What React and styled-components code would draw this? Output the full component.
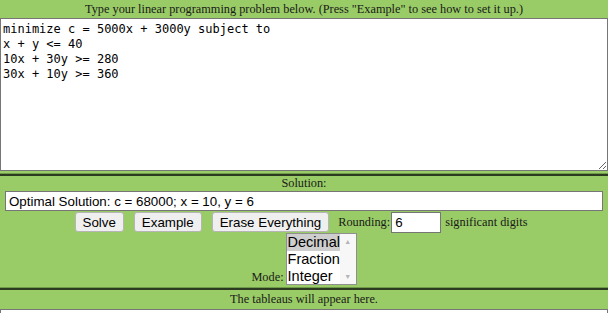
import React from 'react'
import styled, { createGlobalStyle } from 'styled-components'

const Global = createGlobalStyle`
  html, body { margin: 0; padding: 0; background: #ffffff; }
  body { font-family: "Liberation Serif", "Times New Roman", serif; font-size: 12.3px; }
`

const problem = `minimize c = 5000x + 3000y subject to
x + y <= 40
10x + 30y >= 280
30x + 10y >= 360`

const App = () => {
  return (
    <Page>
      <Global />
      <Cell>
        <Caption tall>Type your linear programming problem below. (Press "Example" to see how to set it up.)</Caption>
        <Problem defaultValue={problem} spellCheck={false} />
      </Cell>
      <Cell divided>
        <Caption>Solution:</Caption>
        <Answer readOnly value="Optimal Solution: c = 68000; x = 10, y = 6" />
        <Controls>
          <Line>
            <Button>Solve</Button>
            <Button>Example</Button>
            <Button>Erase Everything</Button>
            <Label lead>Rounding:</Label>
            <Digits readOnly value="6" />
            <Label>significant digits</Label>
          </Line>
          <Line bottom>
            <Label>Mode:</Label>
            <ListBox>
              <Options>
                <Option selected>Decimal</Option>
                <Option>Fraction</Option>
                <Option>Integer</Option>
              </Options>
              <ScrollBar>
                <Arrow>▲</Arrow>
                <Arrow>▼</Arrow>
              </ScrollBar>
            </ListBox>
          </Line>
        </Controls>
      </Cell>
      <Cell divided>
        <Caption tall>The tableaus will appear here.</Caption>
        <Tableaus />
      </Cell>
    </Page>
  )
}

const Page = styled.div`
  width: 608px;
  height: 313px;
  overflow: hidden;
  background: #99cc66;
`
const Cell = styled.div`
  display: flex;
  flex-direction: column;
  background: #99cc66;
  border-top: ${({ divided }) => (divided ? '2px solid #2b3a20' : '0')};
  box-shadow: ${({ divided }) => (divided ? '0 -1px 0 #6f9a4a' : 'none')};
  margin-top: ${({ divided }) => (divided ? '3px' : '0')};
`
const Caption = styled.div`
  text-align: center;
  color: #1a1a1a;
  font-family: "Liberation Serif", "Times New Roman", serif;
  font-size: 12.3px;
  line-height: ${({ tall }) => (tall ? '17px' : '15px')};
  padding-top: ${({ tall }) => (tall ? '1px' : '0')};
`
const Problem = styled.textarea`
  box-sizing: border-box;
  width: 100%;
  height: 153px;
  margin: 0;
  padding: 3px 2px 2px;
  border: 1px solid #767676;
  background: #ffffff;
  color: #000;
  font-family: "DejaVu Sans Mono", "Liberation Mono", monospace;
  font-size: 12px;
  line-height: 15px;
  resize: both;
  outline: none;
`
const Answer = styled.input`
  box-sizing: border-box;
  margin: 0 5px;
  height: 20px;
  padding: 1px 3px;
  border: 1px solid #767676;
  background: #ffffff;
  color: #000;
  font-family: "Liberation Sans", Arial, sans-serif;
  font-size: 13.33px;
`
const Controls = styled.div`
  display: flex;
  flex-direction: column;
  align-items: center;
`
const Line = styled.div`
  display: flex;
  align-items: ${({ bottom }) => (bottom ? 'flex-end' : 'center')};
  gap: ${({ bottom }) => (bottom ? '2px' : '10px')};
  height: ${({ bottom }) => (bottom ? '52px' : '22px')};
  padding-right: ${({ bottom }) => (bottom ? '0' : '6px')};
`
const Button = styled.button`
  height: 20px;
  padding: 1px 7px;
  border: 1px solid #b5b5b5;
  border-radius: 3px;
  background: #efefef;
  color: #000;
  font-family: "Liberation Sans", Arial, sans-serif;
  font-size: 13.33px;
`
const Label = styled.span`
  font-family: "Liberation Serif", "Times New Roman", serif;
  font-size: 12.3px;
  color: #1a1a1a;
  line-height: 15px;
  margin-left: ${({ lead }) => (lead ? '-1px' : '0')};
`
const Digits = styled.input`
  box-sizing: border-box;
  width: 50px;
  height: 21px;
  margin-left: -9px;
  margin-right: -6px;
  padding: 1px 3px;
  border: 1px solid #767676;
  background: #fff;
  font-family: "Liberation Sans", Arial, sans-serif;
  font-size: 13.33px;
`
const ListBox = styled.div`
  display: flex;
  width: 71px;
  height: 52px;
  box-sizing: border-box;
  border: 1px solid #8f8f8f;
  background: #ffffff;
`
const Options = styled.div`
  flex: 1;
  display: flex;
  flex-direction: column;
`
const Option = styled.div`
  height: 17px;
  padding-left: 1px;
  font-family: "Liberation Sans", Arial, sans-serif;
  font-size: 14.5px;
  line-height: 17px;
  color: #000;
  background: ${({ selected }) => (selected ? '#cecece' : 'transparent')};
`
const ScrollBar = styled.div`
  width: 16px;
  display: flex;
  flex-direction: column;
  justify-content: space-between;
  align-items: center;
  background: #f7f7f7;
  padding: 4px 0 3px;
`
const Arrow = styled.span`
  font-size: 7px;
  color: #b4b4b4;
  line-height: 8px;
`
const Tableaus = styled.div`
  height: 10px;
  background: #fff;
  border: 1px solid #767676;
  margin-top: 1px;
`

export default App
